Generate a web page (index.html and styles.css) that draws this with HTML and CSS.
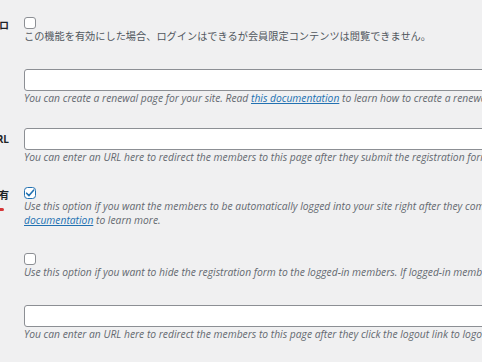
FILE: index.html
```html
<!DOCTYPE html>
<html lang="ja">
<head>
<meta charset="utf-8">
<title>Settings</title>
<link rel="stylesheet" href="styles.css">
</head>
<body>
<div class="form">
  <div class="row r1">
    <div class="label"><span>ロ</span></div>
    <div class="field">
      <span class="cb"></span>
      <p class="note">この機能を有効にした場合、ログインはできるが会員限定コンテンツは閲覧できません。</p>
    </div>
  </div>
  <div class="row r2">
    <div class="label"></div>
    <div class="field">
      <div class="input"></div>
      <p class="desc">You can create a renewal page for your site. Read <a href="#">this documentation</a> to learn how to create a renewal page.</p>
    </div>
  </div>
  <div class="row r3">
    <div class="label"><span>RL</span></div>
    <div class="field">
      <div class="input"></div>
      <p class="desc">You can enter an URL here to redirect the members to this page after they submit the registration form.</p>
    </div>
  </div>
  <div class="row r4">
    <div class="label"><span>有</span><span class="req"></span></div>
    <div class="field">
      <span class="cb checked"><svg viewBox="0 0 12 12" width="12" height="12"><path d="M2.6 6.2 L5 8.6 L9.6 3.2" fill="none" stroke="#2271b1" stroke-width="1.6" stroke-linecap="round" stroke-linejoin="round"/></svg></span>
      <p class="desc">Use this option if you want the members to be automatically logged into your site right after they complete the registration. Read this<br><a href="#">documentation</a> to learn more.</p>
    </div>
  </div>
  <div class="row r5">
    <div class="label"></div>
    <div class="field">
      <span class="cb"></span>
      <p class="desc">Use this option if you want to hide the registration form to the logged-in members. If logged-in members visit the page.</p>
    </div>
  </div>
  <div class="row r6">
    <div class="label"></div>
    <div class="field">
      <div class="input"></div>
      <p class="desc">You can enter an URL here to redirect the members to this page after they click the logout link to logout.</p>
    </div>
  </div>
</div>
</body>
</html>
```
FILE: styles.css
```css
html, body {
  margin: 0;
  padding: 0;
  background: #f0f0f1;
  overflow: hidden;
}
body {
  width: 482px;
  height: 362px;
  font-family: "Open Sans", "Noto Sans CJK JP", sans-serif;
  font-size: 10px;
  color: #3c434a;
}
.form {
  padding-top: 5px;
}
.row {
  display: grid;
  grid-template-columns: 24px 1fr;
  padding: 12px 0;
}
.r2 { padding-top: 14px; }
.r3 { padding-top: 11px; }
.r4 { padding-top: 11px; }
.r5 { padding-top: 14px; }
.r6 { padding-top: 14px; }
.label {
  display: flex;
  flex-direction: column;
  align-items: flex-end;
  padding-right: 15px;
  font-weight: bold;
  color: #1d2327;
  font-size: 10px;
  line-height: 14px;
  white-space: nowrap;
  overflow: hidden;
}
.r1 .label { padding-top: 1px; }
.r3 .label { padding-top: 4px; }
.r4 .label { padding-top: 1px; }
.req {
  display: block;
  width: 6px;
  height: 3px;
  margin-top: 6px;
  margin-right: 5px;
  background: #d63638;
  border-radius: 2px;
}
.field {
  min-width: 0;
  white-space: nowrap;
}
.cb {
  display: block;
  box-sizing: border-box;
  width: 12px;
  height: 12px;
  background: #fff;
  border: 1px solid #8c8f94;
  border-radius: 3px;
}
.cb.checked {
  border: 1.5px solid #2271b1;
  border-radius: 3.5px;
  position: relative;
}
.cb.checked svg {
  position: absolute;
  left: -1.5px;
  top: -1.5px;
}
.note {
  margin: 0;
  font-family: "Noto Sans CJK JP", sans-serif;
  font-size: 10.2px;
  line-height: 14px;
  color: #50575e;
}
.input {
  box-sizing: border-box;
  width: 600px;
  height: 22px;
  background: #fff;
  border: 1px solid #8c8f94;
  border-radius: 3px;
}
.desc {
  margin: 0;
  font-style: italic;
  font-size: 10.3px;
  line-height: 14px;
  color: #646970;
}
.desc a {
  color: #2271b1;
  text-decoration: underline;
}
```
